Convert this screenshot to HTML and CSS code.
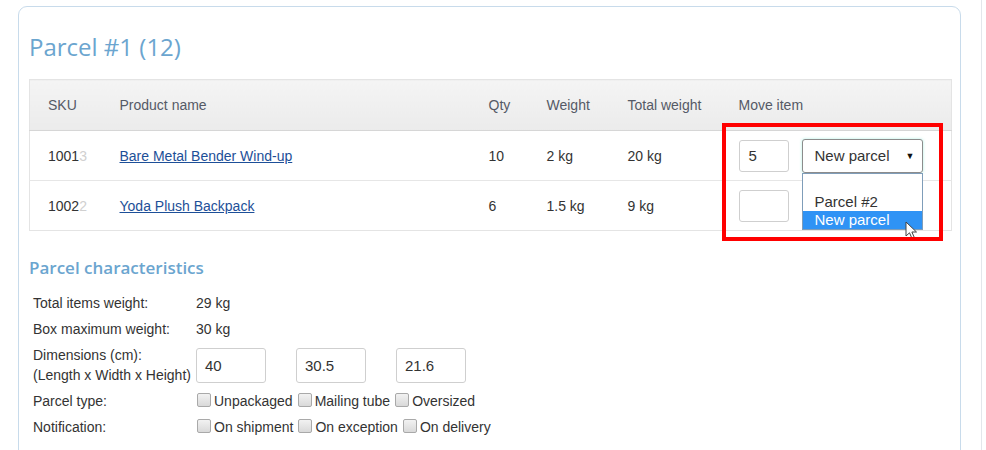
FILE: index.html
```html
<!DOCTYPE html>
<html>
<head>
<meta charset="utf-8">
<link rel="stylesheet" href="styles.css">
</head>
<body>
<div class="page">
  <div class="card">
    <h1 class="title">Parcel #1 (12)</h1>
    <div class="table-wrap">
      <table class="items">
        <colgroup>
          <col class="c-sku"><col class="c-name"><col class="c-qty"><col class="c-w"><col class="c-tw"><col class="c-move">
        </colgroup>
        <thead>
          <tr><th>SKU</th><th>Product name</th><th>Qty</th><th>Weight</th><th>Total weight</th><th>Move item</th></tr>
        </thead>
        <tbody>
          <tr>
            <td class="sku">1001<span class="fade">3</span></td>
            <td><a href="#" class="link">Bare Metal Bender Wind-up</a></td>
            <td>10</td><td>2 kg</td><td>20 kg</td>
            <td>
              <div class="move">
                <div class="qty-input">5</div>
                <div class="select-wrap">
                  <div class="select"><span>New parcel</span><span class="arrow">▼</span></div>
                  <div class="dropdown">
                    <div class="opt"></div>
                    <div class="opt">Parcel #2</div>
                    <div class="opt selected">New parcel</div>
                  </div>
                  <svg class="cursor" width="13" height="20" viewBox="0 0 13 20"><path d="M1 1 L1 15 L4.5 11.8 L7 17.5 L9.3 16.5 L6.9 11 L11.5 11 Z" fill="#fff" stroke="#444" stroke-width="1" stroke-linejoin="round"/></svg>
                </div>
              </div>
            </td>
          </tr>
          <tr>
            <td class="sku">1002<span class="fade">2</span></td>
            <td><a href="#" class="link">Yoda Plush Backpack</a></td>
            <td>6</td><td>1.5 kg</td><td>9 kg</td>
            <td>
              <div class="move">
                <div class="qty-input"></div>
              </div>
            </td>
          </tr>
        </tbody>
      </table>
      <div class="highlight"></div>
    </div>
    <h2 class="section">Parcel characteristics</h2>
    <div class="props">
      <div class="row">
        <div class="label">Total items weight:</div>
        <div class="value">29 kg</div>
      </div>
      <div class="row">
        <div class="label">Box maximum weight:</div>
        <div class="value">30 kg</div>
      </div>
      <div class="row dim">
        <div class="label">Dimensions (cm):<br>(Length x Width x Height)</div>
        <div class="value dims">
          <div class="dim-input">40</div>
          <div class="dim-input">30.5</div>
          <div class="dim-input">21.6</div>
        </div>
      </div>
      <div class="row">
        <div class="label">Parcel type:</div>
        <div class="value checks">
          <span class="cb"></span><span class="cbl">Unpackaged</span>
          <span class="cb"></span><span class="cbl">Mailing tube</span>
          <span class="cb"></span><span class="cbl">Oversized</span>
        </div>
      </div>
      <div class="row">
        <div class="label">Notification:</div>
        <div class="value checks">
          <span class="cb"></span><span class="cbl">On shipment</span>
          <span class="cb"></span><span class="cbl">On exception</span>
          <span class="cb"></span><span class="cbl">On delivery</span>
        </div>
      </div>
    </div>
    <div class="next-box"></div>
  </div>
  <div class="rule"></div>
</div>
</body>
</html>
```
FILE: styles.css
```css
html, body {
  margin: 0;
  padding: 0;
  background: #fff;
  overflow: hidden;
}
body {
  font-family: "Liberation Sans", Arial, sans-serif;
  color: #333;
  height: 450px;
}
.page {
  display: flex;
  padding: 6px 0 0 18px;
  height: 444px;
}
.card {
  width: 943px;
  height: 600px;
  border: 1px solid #c8dbeb;
  border-radius: 9px;
  padding: 24px 10px 0 10px;
  box-sizing: border-box;
  flex: none;
}
.rule {
  margin-left: 20px;
  border-left: 1px solid #e3e7eb;
  height: 460px;
  margin-top: -6px;
}
.title {
  margin: 0 0 16px 0;
  font-family: "Open Sans", sans-serif;
  font-weight: 400;
  font-size: 24px;
  line-height: 32px;
  color: #6ba5cf;
  padding-left: 0;
}
.table-wrap {
  position: relative;
}
.items {
  width: 922px;
  border-collapse: collapse;
  table-layout: fixed;
  border: 1px solid #e4e4e4;
  font-size: 14px;
}
.c-sku { width: 72px; }
.c-name { width: 369px; }
.c-qty { width: 58px; }
.c-w { width: 81px; }
.c-tw { width: 111px; }
.c-move { width: 231px; }
.items th {
  text-align: left;
  font-weight: 400;
  color: #555a66;
  height: 50px;
  padding: 0 0 0 18px;
  background: linear-gradient(#f4f4f4, #ebebeb);
  border-bottom: 1px solid #d6d6d6;
}
.items td {
  height: 49px;
  padding: 0 0 0 18px;
  border-top: 1px solid #e6e6e6;
  color: #333;
  white-space: nowrap;
  overflow: visible;
}
.sku .fade { color: #d0d0d0; }
.link {
  color: #1d4f98;
  font-size: 14px;
  text-decoration: underline;
}
.move {
  display: flex;
  align-items: center;
  gap: 13px;
}
.qty-input {
  width: 50px;
  height: 32px;
  box-sizing: border-box;
  border: 1px solid #cfcfcf;
  border-radius: 3px;
  font-size: 15px;
  line-height: 30px;
  padding-left: 9px;
  color: #333;
}
.select-wrap {
  position: relative;
}
.select {
  width: 121px;
  height: 34px;
  box-sizing: border-box;
  border: 1px solid #8c8c8c;
  border-radius: 3px;
  box-shadow: 0 0 3px rgba(120, 230, 210, 0.6);
  display: flex;
  align-items: center;
  justify-content: space-between;
  padding: 0 7px 0 12px;
  font-size: 15px;
  color: #333;
  background: #fff;
}
.arrow {
  font-size: 9px;
  color: #111;
}
.dropdown {
  position: absolute;
  top: 34px;
  left: 0;
  width: 121px;
  box-sizing: border-box;
  border: 1px solid #7f9db9;
  background: #fff;
  z-index: 2;
}
.opt {
  height: 18px;
  line-height: 18px;
  padding-left: 12px;
  font-size: 15px;
  color: #333;
}
.opt:first-child { height: 19px; }
.opt.selected {
  background: #2f93f5;
  color: #fff;
}
.cursor {
  position: absolute;
  left: 103px;
  top: 82px;
  z-index: 3;
}
.highlight {
  position: absolute;
  left: 693px;
  top: 44px;
  width: 221px;
  height: 118px;
  box-sizing: border-box;
  border: 4px solid #ff0000;
  z-index: 4;
}
.section {
  margin: 25px 0 10px 0;
  font-family: "Open Sans", sans-serif;
  font-weight: 600;
  font-size: 17px;
  line-height: 24px;
  color: #6ba5cf;
}
.props {
  padding-left: 4px;
  font-size: 14px;
}
.row {
  display: grid;
  grid-template-columns: 163px auto;
  align-items: center;
  min-height: 26px;
}
.row.dim {
  min-height: 46px;
}
.label {
  line-height: 20px;
  color: #333;
}
.value { color: #333; }
.dims {
  display: flex;
  gap: 30px;
}
.dim-input {
  width: 70px;
  height: 35px;
  box-sizing: border-box;
  border: 1px solid #cfcfcf;
  border-radius: 3px;
  font-size: 15px;
  line-height: 33px;
  padding-left: 8px;
  color: #333;
}
.checks {
  display: flex;
  align-items: center;
  font-size: 14px;
}
.cb {
  width: 12px;
  height: 12px;
  border: 1px solid #a9a9a9;
  border-radius: 2px;
  background: linear-gradient(#f2f2f2, #d9d9d9);
  margin: 0 3px 2px 1px;
  flex: none;
}
.cbl {
  margin-right: 4px;
}
.next-box {
  margin-top: 12px;
  height: 30px;
  border-left: 1px solid #d2dde8;
}
```
